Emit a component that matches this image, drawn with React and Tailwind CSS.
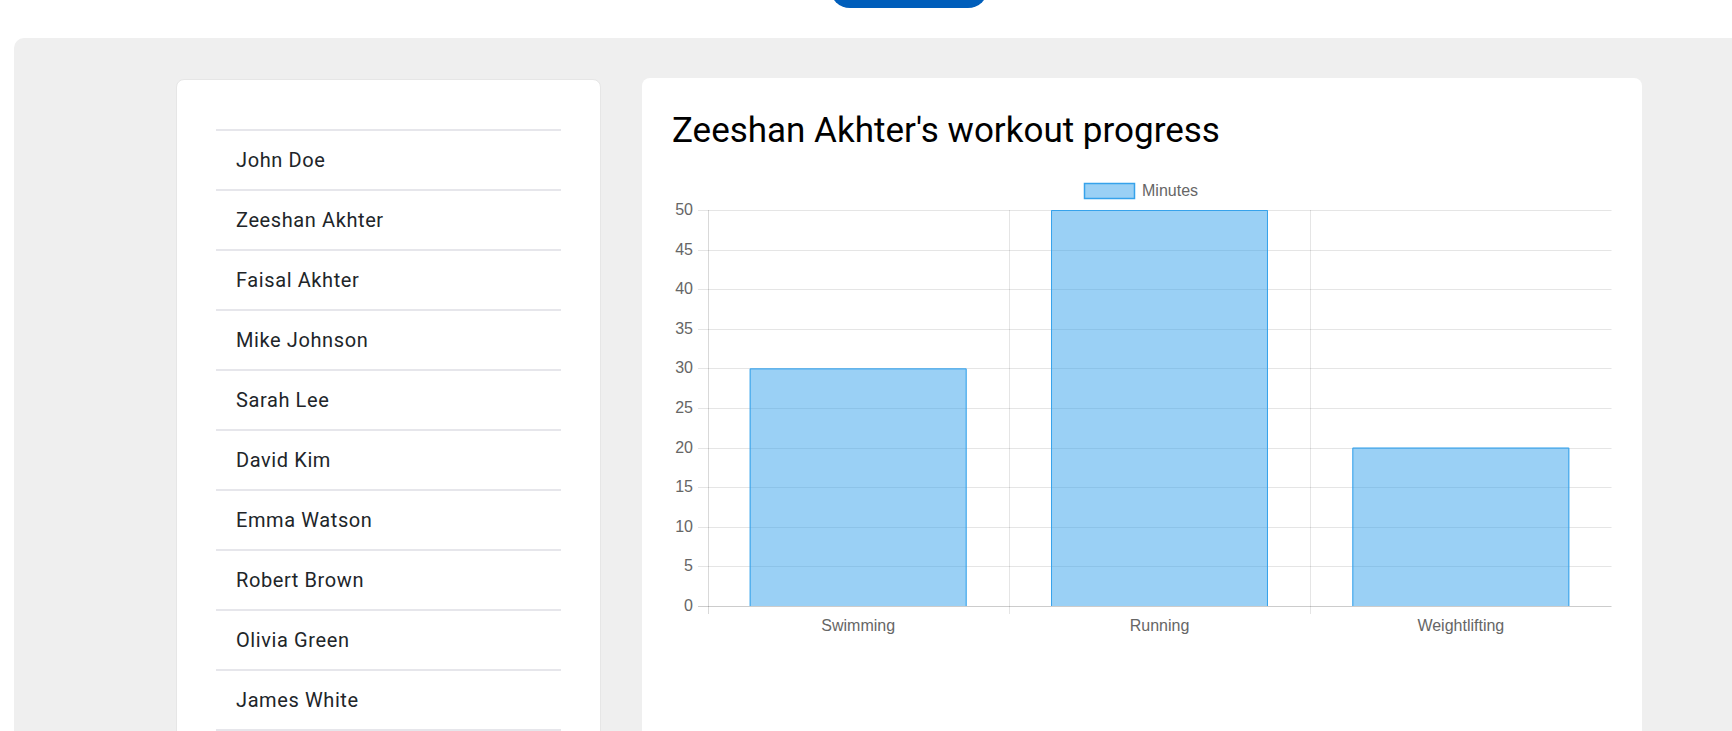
import React from "react";

const users = [
  "John Doe",
  "Zeeshan Akhter",
  "Faisal Akhter",
  "Mike Johnson",
  "Sarah Lee",
  "David Kim",
  "Emma Watson",
  "Robert Brown",
  "Olivia Green",
  "James White",
];

const workouts = [
  { type: "Swimming", minutes: 30 },
  { type: "Running", minutes: 50 },
  { type: "Weightlifting", minutes: 20 },
];

// chart geometry (px inside the svg)
const W = 940;
const H = 470;
const left = 35.5;
const right = 939.5;
const top = 38;
const bottom = 434;
const max = 50;
const unit = (bottom - top) / max;

function WorkoutChart() {
  const cat = (right - left) / workouts.length;
  const barW = cat * 0.72;
  const ticks = [];
  for (let v = 0; v <= max; v += 5) ticks.push(v);

  return (
    <svg width={W} height={H} className="block" style={{ fontFamily: "'Liberation Sans', Arial, sans-serif" }}>
      {/* legend */}
      <rect x="412.5" y="11.5" width="50" height="15" fill="rgba(54,162,235,0.5)" stroke="rgb(54,162,235)" strokeWidth="1.5" />
      <text x="470" y="19.5" fontSize="16" fill="#666" dominantBaseline="middle">
        Minutes
      </text>

      {/* horizontal grid */}
      {ticks.map((v) => {
        const y = Math.round(bottom - v * unit) + 0.5;
        return (
          <g key={v}>
            <line x1="26" x2={right} y1={y} y2={y} stroke={v === 0 ? "rgba(0,0,0,0.2)" : "rgba(0,0,0,0.1)"} />
            <text x="21" y={y} fontSize="16" fill="#666" textAnchor="end" dominantBaseline="middle">
              {v}
            </text>
          </g>
        );
      })}

      {/* vertical grid */}
      {[0, 1, 2, 3].map((i) => {
        const x = Math.round(left + i * cat) + 0.5;
        return <line key={i} x1={x} x2={x} y1={top} y2={bottom + 8} stroke={i === 0 ? "rgba(0,0,0,0.15)" : "rgba(0,0,0,0.1)"} />;
      })}

      {/* bars */}
      {workouts.map((w, i) => {
        const x = left + i * cat + (cat - barW) / 2;
        const y = bottom - w.minutes * unit;
        return (
          <g key={w.type}>
            <rect x={x} y={y} width={barW} height={bottom - y} fill="rgba(54,162,235,0.5)" />
            <path
              d={`M${x + 0.5} ${bottom} V${y + 0.5} H${x + barW - 0.5} V${bottom}`}
              fill="none"
              stroke="rgb(54,162,235)"
              strokeWidth="1"
            />
            <text x={left + i * cat + cat / 2} y="455" fontSize="16" fill="#666" textAnchor="middle" dominantBaseline="middle">
              {w.type}
            </text>
          </g>
        );
      })}
    </svg>
  );
}

export default function App() {
  return (
    <div className="h-[731px] overflow-hidden bg-white font-['Roboto',sans-serif]">
      <div className="ml-[14px] w-[1790px]">
        {/* header */}
        <div className="flex h-[38px] justify-center">
          <button className="-mt-[32px] h-[40px] w-[158px] rounded-[20px] bg-[#005EBB]" />
        </div>

        {/* body */}
        <div className="flex h-[720px] items-start justify-center gap-[41px] rounded-tl-[10px] bg-[#efefef] pt-[41px]">
          <div className="h-[700px] w-[425px] rounded-lg border border-[#e6e6e6] bg-white px-[39px] pt-[49px]">
            <ul className="border-t-2 border-[#e6e6eb]">
              {users.map((name) => (
                <li
                  key={name}
                  className="flex h-[60px] items-center border-b-2 border-[#e6e6eb] pl-[20px] text-[20px] tracking-[0.6px] text-[#212529]"
                >
                  {name}
                </li>
              ))}
            </ul>
          </div>

          <div className="-mt-px h-[700px] w-[1000px] rounded-lg bg-white p-[30px]">
            <h2 className="mt-[2px] mb-[20px] text-[35px] leading-[42px] font-normal text-black">
              Zeeshan Akhter's workout progress
            </h2>
            <WorkoutChart />
          </div>
        </div>
      </div>
    </div>
  );
}
